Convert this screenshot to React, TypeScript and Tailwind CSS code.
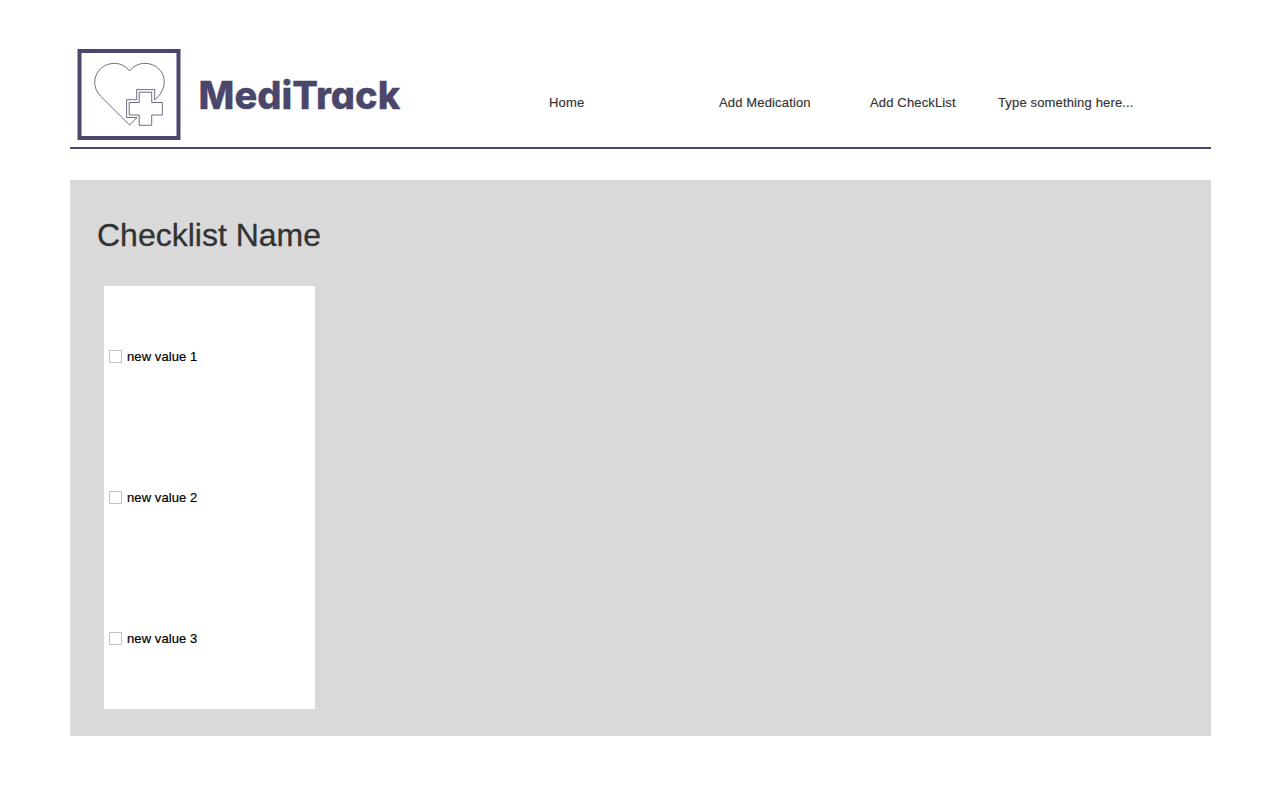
const navItems = [
  { label: "Home", box: "w-[170px]" },
  { label: "Add Medication", box: "w-[151px]" },
  { label: "Add CheckList", box: "w-[128px]" },
];

const values = ["new value 1", "new value 2", "new value 3"];

function Logo() {
  return (
    <svg className="h-[91px] w-[104px] shrink-0" viewBox="77 49 104 91" fill="none" stroke="#4a476b">
      <rect x="79.5" y="51" width="99" height="87" strokeWidth="4" />
      <path
        strokeWidth="0.8"
        d="M137 117.5L129.6 125L100.5 96C92.8 88.3 92.8 76.4 100.3 69C108.2 61.2 122.5 61.2 129.6 71C136.7 61.2 151 61.2 158.9 69C166.9 77 166.2 90.3 154.7 100V89.6H136.7V99.7H126.6V117.5H137"
      />
      <path
        strokeWidth="0.8"
        d="M139.2 92.2H151.7V102.5H162.3V115H151.7V125.3H139.2V115H129.2V102.5H139.2Z"
      />
    </svg>
  );
}

export default function App() {
  return (
    <div className="h-[800px] w-[1280px] overflow-hidden bg-white px-[69.5px] pt-[49px] font-['Liberation_Sans',Arial,sans-serif]">
      <header className="flex h-[100px] border-b-2 border-[#4a476b] pl-[7.5px]">
        <Logo />
        <svg className="ml-[17px] mt-[21px] h-[50px] w-[210px] shrink-0" viewBox="198 70 210 50" role="img">
          <text
            x="198.6"
            y="109"
            fill="#4a476b"
            stroke="#4a476b"
            strokeWidth="0.3"
            textLength="201.6"
            lengthAdjust="spacing"
            className="font-['Inter',sans-serif] text-[38px] font-extrabold [font-feature-settings:'cv11']"
          >
            MediTrack
          </text>
        </svg>
        <nav className="ml-[141px] mt-[44px] flex text-[13px] leading-[20px] tracking-[0.15px] text-[#333] [-webkit-text-stroke:0.15px_#333]">
          {navItems.map((item) => (
            <a key={item.label} className={item.box}>{item.label}</a>
          ))}
          <span>Type something here...</span>
        </nav>
      </header>
      <main className="mt-[31px] h-[556px] bg-[#d9d9d9] pl-[27.5px] pt-[35px]">
        <h1 className="h-[40px] text-[32px] leading-[40px] text-[#333] [-webkit-text-stroke:0.3px_#333]">Checklist Name</h1>
        <ul className="ml-[7px] mt-[31px] flex h-[423px] w-[211px] flex-col bg-white">
          {values.map((value) => (
            <li key={value} className="flex h-[141px] items-center gap-[5px] pl-[5px] text-[13px] text-black">
              <span className="size-[13px] border border-[#c4c4c4] bg-white" />
              <span className="tracking-[0.09px] [-webkit-text-stroke:0.2px_#000]">{value}</span>
            </li>
          ))}
        </ul>
      </main>
    </div>
  );
}
